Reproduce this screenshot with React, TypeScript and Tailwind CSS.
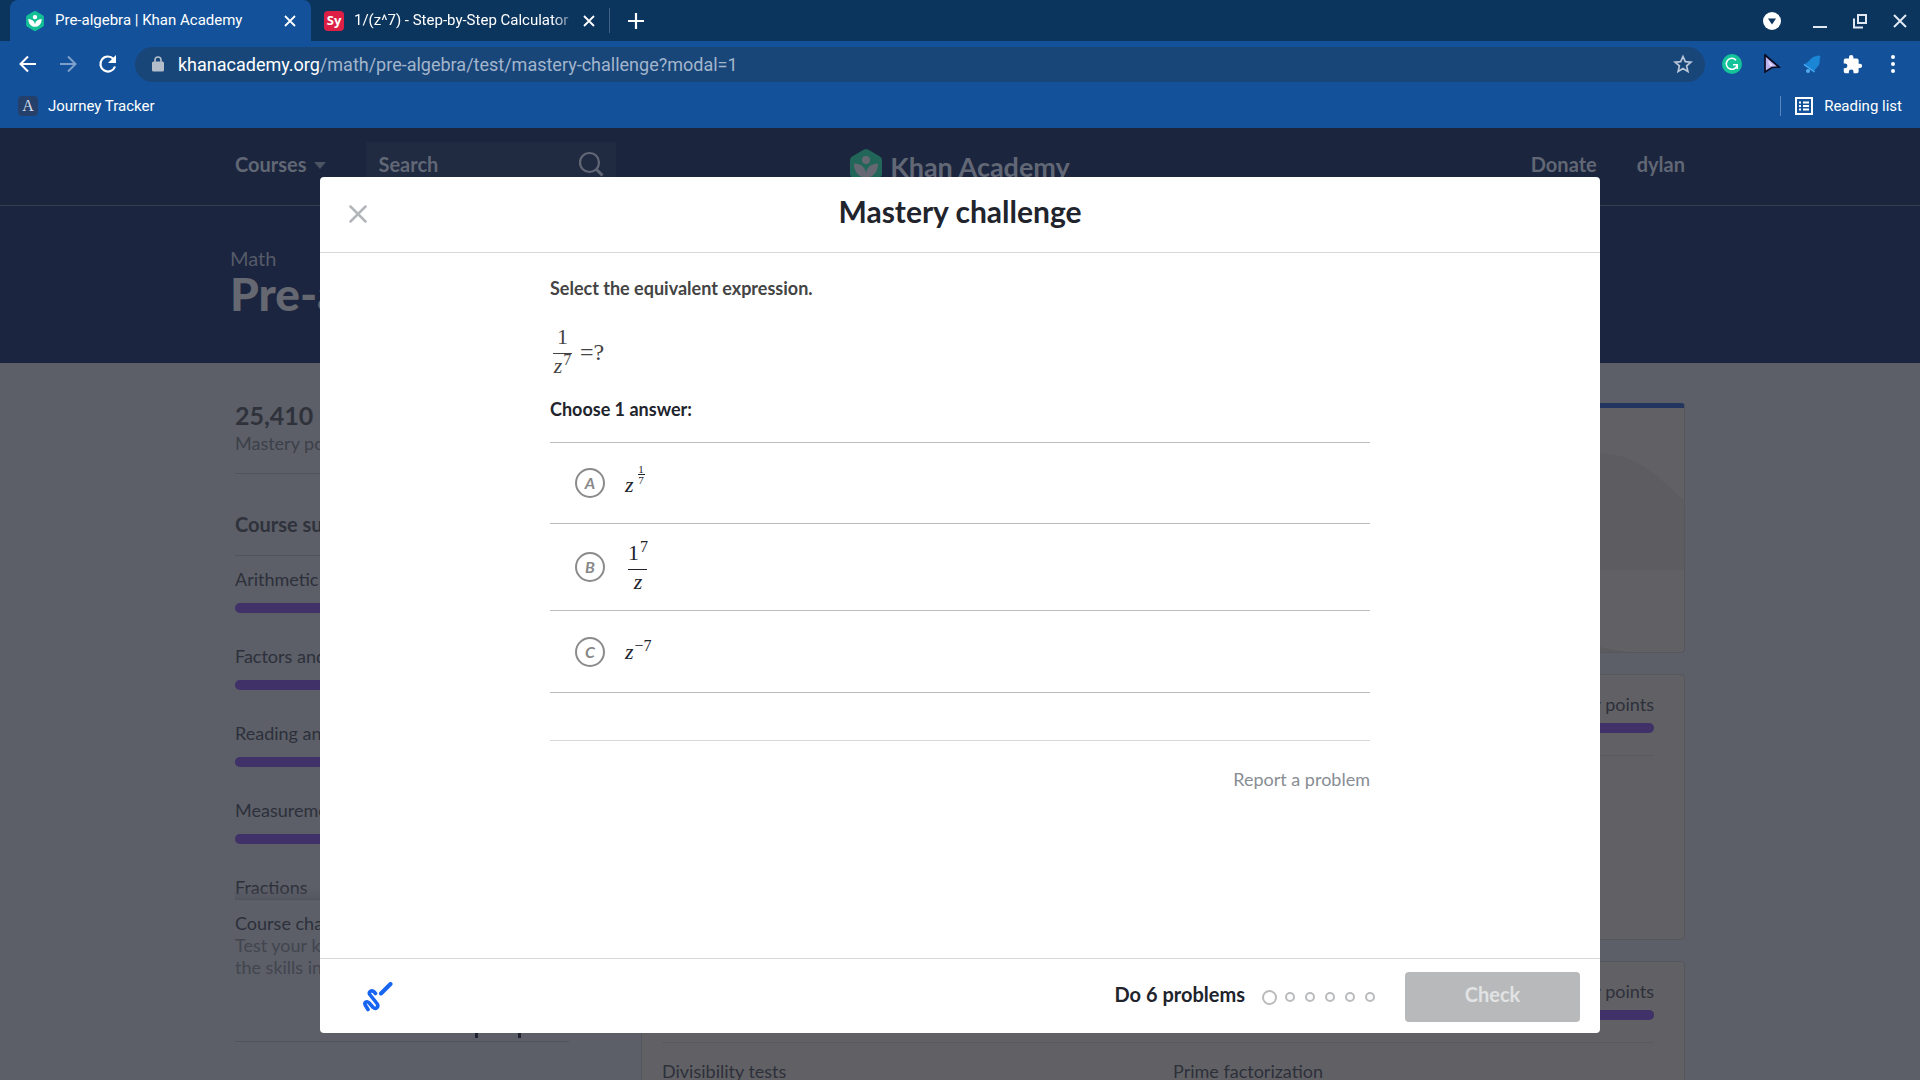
import React, { useState } from 'react';

interface Answer {
  id: string;
  label: React.ReactNode;
  height: string;
}

const units = [
  { name: 'Arithmetic properties', progress: 100 },
  { name: 'Factors and multiples', progress: 100 },
  { name: 'Reading and interpreting data', progress: 100 },
  { name: 'Measurement', progress: 100 },
  { name: 'Fractions', progress: 100 },
];

const KhanLeaf = ({ className, hex, leaf }: { className: string; hex: string; leaf: string }) => (
  <svg viewBox="0 0 32 36" className={className} aria-hidden="true">
    <path d="M14 .6a4 4 0 0 1 4 0l12 6.9a4 4 0 0 1 2 3.5v14a4 4 0 0 1-2 3.5l-12 6.9a4 4 0 0 1-4 0l-12-6.9A4 4 0 0 1 0 25V11a4 4 0 0 1 2-3.500z" fill={hex} />
    <circle cx="16" cy="11" r="4" fill={leaf} />
    <path d="M4 14.500c7 .2 11 3.500 12 9.500 1-6 5-9.300 12-9.500 0 8-4.500 14-12 14s-12-6-12-14z" fill={leaf} />
  </svg>
);

const Fraction = ({ top, bottom }: { top: React.ReactNode; bottom: React.ReactNode }) => (
  <span className="mx-[3px] inline-flex flex-col items-center">
    <span className="pb-1 leading-6">{top}</span>
    <span className="w-[19px] h-px bg-current" />
    <span className="leading-6">{bottom}</span>
  </span>
);

const Sup = ({ children }: { children: React.ReactNode }) => (
  <sup className="ml-px text-[16px] not-italic">{children}</sup>
);

const answers: Answer[] = [
  {
    id: 'A',
    height: 'h-[81px]',
    label: (
      <span className="flex items-start">
        <i className="pt-[9px] pb-[5px] leading-6">z</i>
        <span className="ml-1 inline-flex flex-col items-center text-[11px] leading-[10px]">
          <span>1</span>
          <span className="w-[7px] h-px bg-current" />
          <span>7</span>
        </span>
      </span>
    ),
  },
  { id: 'B', height: 'h-[87px]', label: <Fraction top={<>1<Sup>7</Sup></>} bottom={<i>z</i>} /> },
  { id: 'C', height: 'h-[81px]', label: <span className="leading-6"><i>z</i><Sup>−7</Sup></span> },
];

const CloseIcon = ({ className }: { className: string }) => (
  <svg viewBox="0 0 12 12" className={className} fill="none" stroke="currentColor" strokeWidth="1.8" aria-hidden="true">
    <path d="M1 1l10 10M11 1L1 11" />
  </svg>
);

const TabStrip = () => (
  <div className="flex h-[41px] shrink-0 items-stretch bg-[#0c355e] pl-[10px] text-[15px] text-white">
    <div className="flex w-[301px] items-center rounded-t-lg bg-[#13529a] pl-4 pr-[15px]">
      <KhanLeaf className="h-5 w-[18px] shrink-0" hex="#14bf96" leaf="#ffffff" />
      <span className="ml-[11px] flex-1 whitespace-nowrap">Pre-algebra | Khan Academy</span>
      <button aria-label="Close tab"><CloseIcon className="size-3" /></button>
    </div>
    <div className="flex w-[298px] items-center pl-[13px] pr-[14px]">
      <span className="flex size-5 shrink-0 items-center justify-center rounded-sm bg-[#dd1f45] font-['Open_Sans'] text-[13px] font-bold">Sy</span>
      <span className="ml-[10px] flex-1 overflow-hidden whitespace-nowrap [mask-image:linear-gradient(to_right,black_88%,transparent)]">
        1/(z^7) - Step-by-Step Calculator
      </span>
      <button aria-label="Close tab" className="ml-1"><CloseIcon className="size-3" /></button>
    </div>
    <div className="my-2 w-px bg-[#3f6186]" />
    <button aria-label="New tab" className="ml-[18px]">
      <svg viewBox="0 0 16 16" className="size-4" stroke="currentColor" strokeWidth="2.2"><path d="M8 0v16M0 8h16" /></svg>
    </button>
    <div className="ml-auto flex items-center gap-[22px] pr-[11px] text-[#dfe8f3]">
      <button aria-label="Search tabs" className="mr-2">
        <svg viewBox="0 0 18 18" className="size-[18px]"><circle cx="9" cy="9" r="9" fill="#fff" /><path d="M5 6.500h8L9 12.500z" fill="#0c355e" /></svg>
      </button>
      <button aria-label="Minimize">
        <svg viewBox="0 0 18 18" className="size-[18px]" stroke="currentColor" strokeWidth="2"><path d="M2 15h14" /></svg>
      </button>
      <button aria-label="Restore">
        <svg viewBox="0 0 18 18" className="size-[18px]" fill="none" stroke="currentColor" strokeWidth="2"><path d="M7 3h8v8H7zM3 6.500v9h9" /></svg>
      </button>
      <button aria-label="Close window">
        <svg viewBox="0 0 18 18" className="size-[18px]" stroke="currentColor" strokeWidth="2"><path d="M3 3l12 12M15 3L3 15" /></svg>
      </button>
    </div>
  </div>
);

const Toolbar = () => (
  <div className="flex h-[46px] shrink-0 items-center bg-[#13529a] pl-[18px] pr-[17px] text-white">
    <button aria-label="Back">
      <svg viewBox="0 0 20 20" className="size-5" fill="none" stroke="currentColor" strokeWidth="2"><path d="M18 10H3M10 2.500L2.500 10l7.500 7.500" /></svg>
    </button>
    <button aria-label="Forward" className="ml-5 text-[#7d9fcb]">
      <svg viewBox="0 0 20 20" className="size-5" fill="none" stroke="currentColor" strokeWidth="2"><path d="M2 10h15M10 2.500l7.500 7.500-7.500 7.500" /></svg>
    </button>
    <button aria-label="Reload" className="ml-5">
      <svg viewBox="0 0 20 20" className="size-5" fill="none" stroke="currentColor" strokeWidth="2.200"><path d="M17 12.500A7.500 7.500 0 1 1 15.500 5" /><path d="M18 1v8h-8z" fill="currentColor" stroke="none" /></svg>
    </button>
    <div className="ml-[17px] flex h-[35px] flex-1 items-center rounded-full bg-[#194679] pl-[17px] pr-3">
      <svg viewBox="0 0 12 16" className="h-4 w-3 shrink-0 text-[#b4bdca]"><rect y="5.500" width="12" height="10" rx="1.500" fill="currentColor" /><path d="M3 6V4a3 3 0 0 1 6 0v2" fill="none" stroke="currentColor" strokeWidth="1.600" /></svg>
      <span className="ml-[14px] flex-1 whitespace-nowrap text-[18px] text-[#a3b5cc]">
        <span className="text-white">khanacademy.org</span>/math/pre-algebra/test/mastery-challenge?modal=1
      </span>
      <button aria-label="Bookmark this page" className="text-[#b9c6d8]">
        <svg viewBox="0 0 20 20" className="size-5" fill="none" stroke="currentColor" strokeWidth="1.700"><path d="M10 2.500l2.300 5.200 5.600.5-4.300 3.700 1.300 5.500-4.900-2.900-4.900 2.900 1.300-5.500-4.300-3.700 5.600-.5z" /></svg>
      </button>
    </div>
    <div className="ml-[17px] flex items-center gap-5">
      <button aria-label="Grammarly">
        <svg viewBox="0 0 20 20" className="size-5" fill="none"><circle cx="10" cy="10" r="10" fill="#15c39a" /><path d="M14 6.200A5.500 5.500 0 1 0 15.200 11M11 10.800h4.300V15" stroke="#fff" strokeWidth="1.500" /></svg>
      </button>
      <button aria-label="Custom cursor">
        <svg viewBox="0 0 20 20" className="size-5"><path d="M3 1l14 12-7 .5L3 18z" fill="#b9b4ee" stroke="#0d0b20" strokeWidth="1.700" /><path d="M5.500 6l6 5.500-3.500.5z" fill="#e7d9ff" /></svg>
      </button>
      <button aria-label="Notifications">
        <svg viewBox="0 0 20 20" className="size-5"><path d="M18.500 2.500l-1.500-1c-2 .5-4.500.5-6.500 2C7 6 6 9 1.500 10.500L12 18c1-3.500 5-5.500 5.500-9 .4-2.300-.2-4.500 1-6.500z" fill="#1b86d6" /><path d="M2 10.500L12.500 18" stroke="#4aa9ee" strokeWidth="1.500" /><circle cx="6" cy="17" r="2" fill="#54aef0" /></svg>
      </button>
      <button aria-label="Extensions">
        <svg viewBox="0 0 24 24" className="size-[21px]" fill="currentColor"><path d="M20.500 11H19V7a2 2 0 0 0-2-2h-4V3.500a2.500 2.500 0 0 0-5 0V5H4a2 2 0 0 0-2 2v3.800h1.500a2.700 2.700 0 0 1 0 5.400H2V20a2 2 0 0 0 2 2h3.800v-1.500a2.700 2.700 0 0 1 5.400 0V22H17a2 2 0 0 0 2-2v-4h1.500a2.500 2.500 0 0 0 0-5z" /></svg>
      </button>
      <button aria-label="Menu">
        <svg viewBox="0 0 20 20" className="size-5" fill="currentColor"><circle cx="10" cy="3" r="2" /><circle cx="10" cy="10" r="2" /><circle cx="10" cy="17" r="2" /></svg>
      </button>
    </div>
  </div>
);

const BookmarksBar = () => (
  <div className="flex h-[41px] shrink-0 items-center bg-[#13529a] px-[18px] pb-[3px] text-[15px] text-white">
    <a href="#journey" className="flex items-center gap-[10px]">
      <span className="flex size-5 items-center justify-center rounded-sm bg-[#24406b] font-['Liberation_Serif'] text-[16px] text-[#d5dcea]">A</span>
      Journey Tracker
    </a>
    <div className="ml-auto h-5 w-px bg-[#5a86bd]" />
    <button className="ml-[14px] flex items-center gap-[11px]">
      <svg viewBox="0 0 18 18" className="size-[18px]" fill="none" stroke="currentColor" strokeWidth="2"><path d="M1 1h16v16H1zM4 5.500h2M8 5.500h6M4 9h2M8 9h6M4 12.500h2M8 12.500h6" /></svg>
      Reading list
    </button>
  </div>
);

const SiteHeader = () => (
  <header className="h-[78px] shrink-0 border-b border-[#35404f] bg-[#1b253d] text-[20px] font-bold leading-6 text-[#616775]">
    <div className="mx-auto grid h-full max-w-[1450px] grid-cols-[1fr_auto_1fr] items-center">
      <div className="flex items-center pb-[6px]">
        <button className="flex items-center gap-2">
          Courses
          <span className="mt-1 border-x-[6px] border-t-[7px] border-x-transparent border-t-[#4b5362]" />
        </button>
        <div className="ml-10 flex h-11 w-[250px] items-center bg-[#202a41] px-3">
          <input aria-label="Search" placeholder="Search" className="min-w-0 flex-1 bg-transparent outline-none placeholder:text-[#616775]" />
          <svg viewBox="0 0 26 26" className="size-[26px]" fill="none" stroke="currentColor" strokeWidth="2.200"><circle cx="11.500" cy="11.500" r="9.500" /><path d="M18.500 18.500l6 6" strokeWidth="3" /></svg>
        </div>
      </div>
      <a href="#home" className="flex items-center gap-2 text-[27px] leading-9">
        <KhanLeaf className="h-9 w-8" hex="#226559" leaf="#656872" />
        Khan Academy
      </a>
      <nav className="flex justify-end gap-10 pb-[6px]">
        <a href="#donate">Donate</a>
        <a href="#profile">dylan</a>
      </nav>
    </div>
  </header>
);

const Bar = ({ progress }: { progress: number }) => (
  <div className="h-[10px] rounded-full bg-[#53535c]">
    <div className="h-full rounded-full bg-[#413169]" style={{ width: `${progress}%` }} />
  </div>
);

const Sidebar = () => (
  <aside className="w-[334px] shrink-0">
    <p className="text-[25px] font-bold leading-[30px] text-[#2f323b]">25,410</p>
    <p className="mt-[2px] text-[#3d4049]">Mastery points</p>
    <hr className="mt-[19px] border-[#50535c]" />
    <h2 className="mt-[38px] text-[20px] font-bold leading-6 text-[#2f323b]">Course summary</h2>
    <hr className="mt-[19px] border-[#50535c]" />
    <div className="relative h-[343px] overflow-hidden pt-3">
      {units.map((unit) => (
        <div key={unit.name} className="mb-8">
          <p className="mb-[13px]">{unit.name}</p>
          <Bar progress={unit.progress} />
        </div>
      ))}
      <div className="absolute inset-x-0 bottom-0 h-3 bg-linear-to-b from-transparent to-[#50525b]/60" />
    </div>
    <hr className="border-[#50535c]" />
    <p className="mt-3">Course challenge</p>
    <p className="w-[200px] text-[#42454e]">Test your knowledge of the skills in this course.</p>
    <div className="flex h-[63px] items-end justify-end pb-[3px] pr-12">
      <svg viewBox="0 0 46 20" className="h-5 w-[46px]" fill="#1f2230" aria-hidden="true"><path d="M0 0h3v20H0zM43 0h3v20h-3z" /></svg>
    </div>
    <hr className="border-[#50535c]" />
  </aside>
);

const UnitCard = ({ title, children }: { title: string; children?: React.ReactNode }) => (
  <section className="min-h-[266px] rounded border border-[#56575d] bg-[#616165] pt-[18px] pr-[30px] pl-5">
    <div className="mb-2 flex justify-between">
      <h3>{title}</h3>
      <p>Mastery points</p>
    </div>
    <Bar progress={100} />
    <hr className="mt-[22px] border-[#59595f]" />
    {children}
  </section>
);

const CoursePage = () => (
  <>
    <SiteHeader />
    <div className="h-[157px] shrink-0 bg-[#1b253f]">
      <div className="mx-auto max-w-[1460px] pt-10 font-bold text-[#656871]">
        <p className="text-[20px] font-normal leading-6 text-[#565b69]">Math</p>
        <h1 className="text-[46px] font-black leading-[48px]">Pre-algebra</h1>
      </div>
    </div>
    <main className="flex-1 bg-[#5c5f68] text-[18px] leading-[22px] text-[#2d303a]">
      <div className="mx-auto flex max-w-[1450px] gap-[72px] pt-[37px]">
        <Sidebar />
        <div className="flex flex-1 flex-col gap-[21px] pt-[3px]">
          <section className="flex h-[250px] justify-end overflow-hidden rounded border border-t-[5px] border-[#56575d] border-t-[#23355f] bg-[#616165]">
            <svg viewBox="0 0 300 244" className="h-[244px] w-[300px]" aria-hidden="true">
              <path d="M60 162C80 90 150 38 225 46c30 3 50 24 75 46v70z" fill="#5c5c61" />
              <path d="M150 180c30 54 60 60 95 64H120z" fill="#5a5a5f" />
            </svg>
          </section>
          <UnitCard title="Arithmetic properties" />
          <UnitCard title="Factors and multiples">
            <div className="mt-[17px] grid grid-cols-2 gap-[30px]">
              <a href="#divisibility">Divisibility tests</a>
              <a href="#prime">Prime factorization</a>
            </div>
          </UnitCard>
        </div>
      </div>
    </main>
  </>
);

const MasteryModal = () => {
  const [selected, setSelected] = useState<string | null>(null);

  return (
    <div role="dialog" aria-labelledby="modal-title" className="flex w-2/3 flex-col rounded bg-white text-[18px] leading-[22px] text-[#21242c]">
      <div className="grid h-[76px] shrink-0 grid-cols-[76px_1fr_76px] items-center border-b border-[#d6d8da]">
        <button aria-label="Close" className="flex justify-center pb-[2px] text-[#b2b5ba]">
          <svg viewBox="0 0 18 18" className="size-[18px]" stroke="currentColor" strokeWidth="2.500" strokeLinecap="round"><path d="M1.500 1.500l15 15M16.500 1.500l-15 15" /></svg>
        </button>
        <h2 id="modal-title" className="pb-2 text-center text-[30px] font-bold leading-9">Mastery challenge</h2>
      </div>

      {/* Question */}
      <div className="mx-auto w-full max-w-[820px] flex-1 pt-6">
        <p className="font-bold text-[#444444]">Select the equivalent expression.</p>
        <div className="mt-[26px] flex items-center gap-[5px] font-['Liberation_Serif'] text-[22px] leading-6 text-[#444444]">
          <Fraction top="1" bottom={<><i>z</i><Sup>7</Sup></>} />
          <span className="text-[24px]">=?</span>
        </div>
        <fieldset className="mt-5">
          <legend className="mb-[22px] font-bold">Choose 1 answer:</legend>
          <div className="divide-y divide-[#b9bbbd] border-y border-[#b9bbbd]">
            {answers.map((answer) => (
              <label key={answer.id} className={`flex items-center gap-5 pl-[25px] cursor-pointer ${answer.height}`}>
                <span className="grid size-[30px] place-items-center *:col-start-1 *:row-start-1">
                  <input
                    type="radio"
                    name="answer"
                    checked={selected === answer.id}
                    onChange={() => setSelected(answer.id)}
                    className="size-[30px] appearance-none rounded-full border-2 border-[#8b8b8b] checked:border-[#1865f2]"
                  />
                  <span className="text-[16px] font-bold italic text-[#888888]">{answer.id}</span>
                </span>
                <span className="flex items-center font-['Liberation_Serif'] text-[22px]">{answer.label}</span>
              </label>
            ))}
          </div>
        </fieldset>
        <hr className="mt-[47px] border-[#d6d8da]" />
        <div className="mt-[27px] text-right">
          <button className="text-[#888d93]">Report a problem</button>
        </div>
      </div>

      {/* Footer */}
      <div className="flex h-[75px] shrink-0 items-center border-t border-[#d6d8da] pt-[2px] pr-5 pl-[43px] text-[20px] font-bold leading-6">
        <button aria-label="Scratchpad">
          <svg viewBox="0 0 30 30" className="size-[30px]" fill="none" stroke="#1865f2" strokeLinecap="round" strokeLinejoin="round">
            <path d="M27.500 2L18 11.500" strokeWidth="4" />
            <path d="M12.500 11.500L11 9.800c-2.200-2.300-5.800 0-4.200 2.700L14 21.500c2.300 3.300-1.200 6.300-3.800 4L6 20.800c-2.200-2.200-5-.3-3.800 2.200L5 27.500" strokeWidth="3.600" />
          </svg>
        </button>
        <p className="mr-[15px] ml-auto pb-[6px]">Do 6 problems</p>
        <div className="mr-[25px] flex items-center">
          {[0, 1, 2, 3, 4, 5].map((step) => (
            <span key={step} className="flex w-5 items-center justify-center">
              <span className={`rounded-full border-2 border-[#b9bbbd] ${step === 0 ? 'size-[15px]' : 'size-[10px]'}`} />
            </span>
          ))}
        </div>
        <button disabled={!selected} className="h-[50px] w-[175px] rounded bg-[#1865f2] pb-[6px] text-white disabled:bg-[#b7b9bb] disabled:text-[#e2e3e4]">
          Check
        </button>
      </div>
    </div>
  );
};

const App = () => {
  return (
    <div className="flex h-screen flex-col overflow-hidden font-['Roboto',sans-serif]">
      <TabStrip />
      <Toolbar />
      <BookmarksBar />
      <div className="relative flex min-h-0 flex-1 flex-col overflow-hidden font-['Lato',sans-serif]">
        <CoursePage />
        <div className="absolute inset-0 flex justify-center pt-[49px] pb-[47px]">
          <MasteryModal />
        </div>
      </div>
    </div>
  );
};

export default App;
